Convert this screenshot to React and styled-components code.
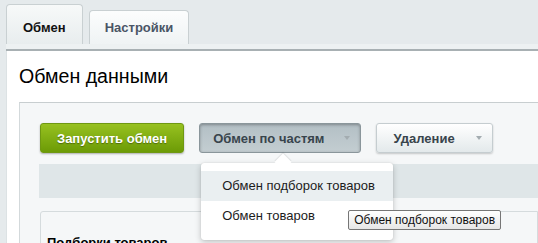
import React from "react";
import styled, { createGlobalStyle } from "styled-components";

const Global = createGlobalStyle`
  html, body { margin: 0; padding: 0; }
  body {
    background: #e5eaec;
    font-family: "Liberation Sans", Arial, sans-serif;
    overflow: hidden;
  }
`;

const Page = styled.div`
  width: 538px;
  height: 243px;
  overflow: hidden;
  background: #e5eaec;
  padding-left: 6px;
  box-sizing: border-box;
`;

const TabBar = styled.div`
  display: flex;
  align-items: flex-end;
  gap: 6px;
  height: 44px;
`;

const Tab = styled.div`
  box-sizing: border-box;
  height: ${(p) => (p.$active ? 40 : 34)}px;
  padding: ${(p) => (p.$active ? "15px 16px 0" : "9px 15px 0")};
  border: 1px solid #c9d0d2;
  border-bottom: none;
  border-radius: 4px 4px 0 0;
  background: ${(p) =>
    p.$active
      ? "linear-gradient(#f7f9f9, #e8edee)"
      : "linear-gradient(#fcfdfd, #eff3f4)"};
  font-weight: bold;
  font-size: 13px;
  line-height: 16px;
  color: ${(p) => (p.$active ? "#111" : "#4a5566")};
  white-space: nowrap;
`;

const Band = styled.div`
  height: 5px;
  background: #edf1f2;
  border-bottom: 2px solid #a8b0b3;
`;

const Panel = styled.div`
  background: #fff;
  border-left: 1px solid #dce2e4;
  padding-left: 12px;
  height: 200px;
`;

const Title = styled.h1`
  margin: 0;
  padding-top: 13px;
  font-weight: normal;
  font-size: 19.6px;
  line-height: 24px;
  color: #000;
`;

const Inner = styled.div`
  margin-top: 14px;
  background: #f5f7f8;
  border-top: 1px solid #c8ced0;
  border-left: 1px solid #d3d9db;
  padding: 20px 0 0 20px;
  height: 200px;
`;

const Toolbar = styled.div`
  display: flex;
  align-items: center;
  gap: 15px;
  height: 30px;
`;

const Button = styled.div`
  position: relative;
  box-sizing: border-box;
  height: 30px;
  display: flex;
  align-items: center;
  border-radius: 3px;
  font-weight: bold;
  font-size: 13px;
  white-space: nowrap;
  padding: ${(p) => p.$pad};
  ${(p) =>
    p.$variant === "green" &&
    `
    background: linear-gradient(#97c120, #6c9b06);
    border: 1px solid #6f9812;
    color: #fff;
    text-shadow: 0 1px 1px rgba(0,0,0,0.35);
    box-shadow: 0 1px 2px rgba(0,0,0,0.3);
  `}
  ${(p) =>
    p.$variant === "pressed" &&
    `
    background: linear-gradient(#b3bfc5, #c3cdd1);
    border: 1px solid #8a969b;
    color: #38444c;
    box-shadow: inset 0 1px 3px rgba(0,0,0,0.3);
  `}
  ${(p) =>
    p.$variant === "plain" &&
    `
    background: linear-gradient(#ffffff, #e3e9eb);
    border: 1px solid #c5cdd0;
    color: #38444c;
    box-shadow: 0 1px 2px rgba(0,0,0,0.2);
  `}
`;

const Arrow = styled.span`
  margin-left: ${(p) => p.$gap}px;
  width: 0;
  height: 0;
  border-left: 3px solid transparent;
  border-right: 3px solid transparent;
  border-top: 4px solid #a3acb0;
`;

const GreyBand = styled.div`
  margin-top: 11px;
  margin-left: -1px;
  height: 34px;
  background: #dfe6e8;
`;

const Box = styled.div`
  margin-top: 13px;
  border: 1px solid #d5dbdd;
  border-radius: 3px 0 0 0;
  background: #f5f7f8;
  padding: 23px 0 0 6px;
  height: 100px;
  font-weight: bold;
  font-size: 13px;
  color: #000;
`;

const Menu = styled.div`
  position: absolute;
  left: 1px;
  top: 39px;
  width: 192px;
  box-sizing: border-box;
  padding: 8px 0 9px;
  background: #fff;
  border-radius: 3px;
  box-shadow: 0 2px 6px rgba(0, 0, 0, 0.22), 0 0 1px rgba(0, 0, 0, 0.2);
  z-index: 5;
  font-weight: normal;
  text-shadow: none;
  &::before {
    content: "";
    position: absolute;
    left: 76px;
    top: -7px;
    width: 12px;
    height: 12px;
    background: #fff;
    transform: rotate(45deg);
    box-shadow: -1px -1px 1px rgba(0, 0, 0, 0.08);
  }
`;

const MenuItem = styled.div`
  position: relative;
  height: 30px;
  line-height: 30px;
  padding-left: 21px;
  font-size: 13px;
  color: #1c1c1c;
  background: ${(p) => (p.$hover ? "#eaeff1" : "transparent")};
`;

const Tooltip = styled.div`
  position: absolute;
  left: 147px;
  top: 47px;
  box-sizing: border-box;
  height: 20px;
  padding: 0 5px;
  line-height: 18px;
  font-size: 12px;
  color: #111;
  background: linear-gradient(#ffffff, #e6e6e6);
  border: 1px solid #767676;
  border-radius: 2px;
  white-space: nowrap;
  z-index: 6;
`;

export default function App() {
  return (
    <>
      <Global />
      <Page>
        <TabBar>
          <Tab $active>Обмен</Tab>
          <Tab>Настройки</Tab>
        </TabBar>
        <Band />
        <Panel>
          <Title>Обмен данными</Title>
          <Inner>
            <Toolbar>
              <Button $variant="green" $pad="0 16px">
                Запустить обмен
              </Button>
              <Button $variant="pressed" $pad="0 10px 0 13px">
                Обмен по частям
                <Arrow $gap={20} />
                <Menu>
                  <MenuItem $hover>Обмен подборок товаров</MenuItem>
                  <MenuItem>Обмен товаров</MenuItem>
                  <Tooltip>Обмен подборок товаров</Tooltip>
                </Menu>
              </Button>
              <Button $variant="plain" $pad="0 10px 0 16px">
                Удаление
                <Arrow $gap={21} />
              </Button>
            </Toolbar>
            <GreyBand />
            <Box>Подборки товаров</Box>
          </Inner>
        </Panel>
      </Page>
    </>
  );
}
